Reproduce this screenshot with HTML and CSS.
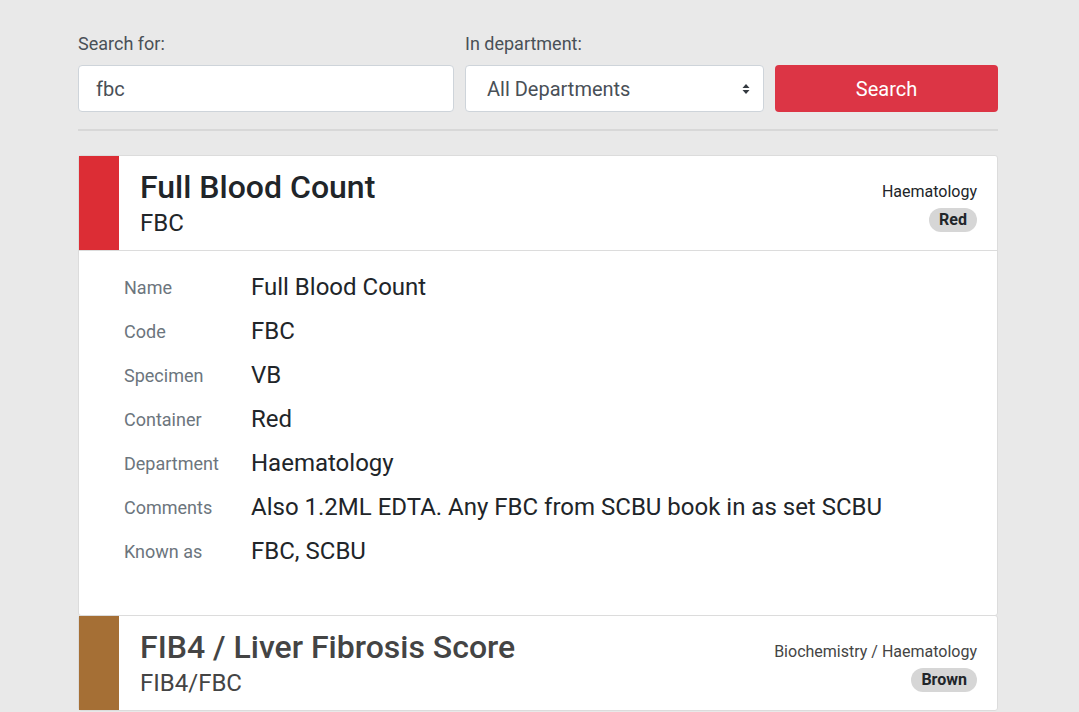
FILE: index.html
```html
<!DOCTYPE html>
<html>
<head>
<meta charset="utf-8">
<link rel="stylesheet" href="styles.css">
</head>
<body>
<div class="container">
  <form class="search">
    <div class="field field-query">
      <label class="label">Search for:</label>
      <div class="input">fbc</div>
    </div>
    <div class="field field-dept">
      <label class="label">In department:</label>
      <div class="select">
        <span>All Departments</span>
        <svg class="caret" width="8" height="12" viewBox="0 0 8 12"><path d="M4 1 L7.5 5 H0.5 Z M4 11 L7.5 7 H0.5 Z" fill="#343a40"/></svg>
      </div>
    </div>
    <div class="field field-btn">
      <button type="button" class="btn">Search</button>
    </div>
  </form>
  <hr class="rule">

  <div class="card">
    <div class="card-head">
      <div class="stripe stripe-red"></div>
      <div class="titles">
        <div class="title">Full Blood Count</div>
        <div class="code">FBC</div>
      </div>
      <div class="meta">
        <div class="dept">Haematology</div>
        <span class="badge">Red</span>
      </div>
    </div>
    <div class="details">
      <div class="k">Name</div><div class="v">Full Blood Count</div>
      <div class="k">Code</div><div class="v">FBC</div>
      <div class="k">Specimen</div><div class="v">VB</div>
      <div class="k">Container</div><div class="v">Red</div>
      <div class="k">Department</div><div class="v">Haematology</div>
      <div class="k">Comments</div><div class="v">Also 1.2ML EDTA. Any FBC from SCBU book in as set SCBU</div>
      <div class="k">Known as</div><div class="v">FBC, SCBU</div>
    </div>
  </div>

  <div class="card card-muted">
    <div class="card-head">
      <div class="stripe stripe-brown"></div>
      <div class="titles">
        <div class="title">FIB4 / Liver Fibrosis Score</div>
        <div class="code">FIB4/FBC</div>
      </div>
      <div class="meta">
        <div class="dept">Biochemistry / Haematology</div>
        <span class="badge">Brown</span>
      </div>
    </div>
  </div>
</div>
</body>
</html>
```

FILE: styles.css
```css
* { box-sizing: border-box; }
html, body { margin: 0; padding: 0; }
body {
  background: #e9e9e9;
  font-family: Roboto, "Liberation Sans", sans-serif;
  color: #212529;
}
.container {
  width: 920px;
  margin: 0 0 0 78px;
  padding-top: 33px;
}
.search {
  display: flex;
  gap: 11px;
  align-items: flex-end;
}
.field { display: flex; flex-direction: column; }
.field-query { width: 376px; }
.field-dept { width: 299px; }
.field-btn { flex: 1; }
.label {
  font-size: 18px;
  color: #495057;
  line-height: 21px;
  margin-bottom: 11px;
}
.input, .select {
  height: 47px;
  background: #fff;
  border: 1px solid #ced4da;
  border-radius: 4px;
  font-size: 20px;
  color: #495057;
  display: flex;
  align-items: center;
}
.input { padding-left: 17px; }
.select { padding: 0 13px 0 21px; justify-content: space-between; }
.btn {
  height: 47px;
  width: 100%;
  background: #dc3545;
  border: none;
  border-radius: 4px;
  color: #fff;
  font-family: inherit;
  font-size: 20px;
}
.rule {
  border: none;
  border-top: 2px solid #d8d8d8;
  margin: 17px 0 24px;
}
.card {
  background: #fff;
  border: 1px solid #dcdcdc;
  border-radius: 3px;
}
.card + .card { margin-top: -1px; }
.card-head {
  display: flex;
  height: 94px;
}
.card .card-head + .details { border-top: 1px solid #dcdcdc; }
.stripe { width: 40px; flex: none; }
.stripe-red { background: #dc2d35; }
.stripe-brown { background: #a56f35; }
.titles {
  flex: 1;
  padding: 12px 0 0 21px;
}
.title {
  font-size: 32px;
  font-weight: 500;
  line-height: 38px;
  color: #212529;
}
.code {
  font-size: 24px;
  line-height: 28px;
  margin-top: 3px;
}
.meta {
  padding: 26px 20px 0 0;
  display: flex;
  flex-direction: column;
  align-items: flex-end;
}
.dept {
  font-size: 16px;
  line-height: 20px;
  color: #212529;
}
.badge {
  margin-top: 6px;
  background: #d6d6d6;
  border-radius: 12px;
  font-size: 16px;
  font-weight: 700;
  line-height: 18px;
  padding: 3px 10px;
  color: #212529;
}
.card-muted .title, .card-muted .code, .card-muted .dept { color: #444; }
.details {
  display: grid;
  grid-template-columns: 127px 1fr;
  grid-auto-rows: 44px;
  align-items: center;
  padding: 14px 0 42px 45px;
}
.k { font-size: 18px; color: #6c757d; }
.v { font-size: 24px; color: #212529; }
```
